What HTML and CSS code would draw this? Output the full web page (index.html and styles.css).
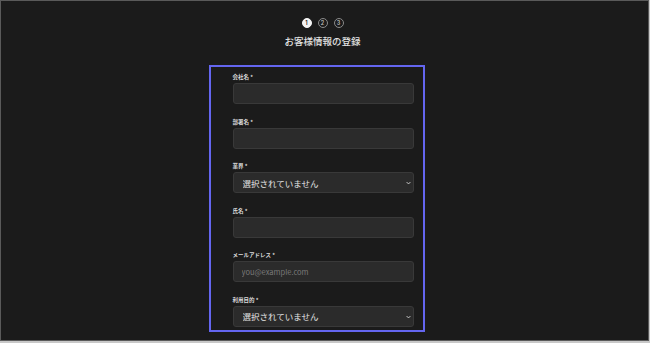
FILE: index.html
```html
<!DOCTYPE html>
<html lang="ja">
<head>
    <meta charset="UTF-8">
    <meta name="viewport" content="width=device-width, initial-scale=1.0">
    <title>お客様情報の登録</title>
    <link rel="stylesheet" href="styles.css">
</head>
<body>
    <div class="frame">
        <div class="column">
            <div class="steps">
                <span class="step active">1</span>
                <span class="step">2</span>
                <span class="step">3</span>
            </div>
            <h1 class="title">お客様情報の登録</h1>

            <form class="form-box">
                <div class="field">
                    <label>会社名 *</label>
                    <input type="text">
                </div>
                <div class="field">
                    <label>部署名 *</label>
                    <input type="text">
                </div>
                <div class="field">
                    <label>業界 *</label>
                    <div class="select-wrap">
                        <select>
                            <option>選択されていません</option>
                        </select>
                        <svg class="chevron" viewBox="0 0 8 5" width="5" height="4"><path d="M1 1l3 3 3-3" fill="none" stroke="#ddd" stroke-width="1.4"/></svg>
                    </div>
                </div>
                <div class="field">
                    <label>氏名 *</label>
                    <input type="text">
                </div>
                <div class="field">
                    <label>メールアドレス *</label>
                    <input type="email" placeholder="you@example.com">
                </div>
                <div class="field">
                    <label>利用目的 *</label>
                    <div class="select-wrap">
                        <select>
                            <option>選択されていません</option>
                        </select>
                        <svg class="chevron" viewBox="0 0 8 5" width="5" height="4"><path d="M1 1l3 3 3-3" fill="none" stroke="#ddd" stroke-width="1.4"/></svg>
                    </div>
                </div>
            </form>
        </div>
    </div>
</body>
</html>
```

FILE: styles.css
```css
html {
    background: #c8c8c8;
}
body {
    margin: 0;
    padding: 0;
    font-family: "Noto Sans CJK JP", "Noto Sans", sans-serif;
    color: #e6e6e6;
}
.frame {
    width: 649px;
    height: 341px;
    box-sizing: border-box;
    border: 1px solid #5a5a5a;
    background: #1b1b1b;
    display: flex;
    justify-content: center;
    padding-right: 4px;
    overflow: hidden;
}
.column {
    width: 184px;
    display: flex;
    flex-direction: column;
    align-items: center;
    padding-top: 17px;
}
.steps {
    display: flex;
    gap: 6px;
}
.step {
    width: 10px;
    height: 10px;
    box-sizing: border-box;
    border-radius: 50%;
    border: 1px solid #8a8a8a;
    color: #bdbdbd;
    font-family: "Inter", sans-serif;
    font-size: 5.5px;
    font-weight: 600;
    display: flex;
    align-items: center;
    justify-content: center;
}
.step.active {
    background: #f4f4f4;
    border-color: #f4f4f4;
    color: #222;
}
.title {
    margin: 6px 0 0;
    font-size: 9.5px;
    line-height: 14px;
    font-weight: 500;
    color: #e2e2e2;
}
.form-box {
    align-self: stretch;
    margin: 17px -10px 0 -22px;
    border: 2px solid #6466f0;
    padding: 6px 9px 3px 22px;
    display: flex;
    flex-direction: column;
    gap: 13.6px;
}
.field {
    display: flex;
    flex-direction: column;
}
.field label {
    font-size: 5.5px;
    line-height: 8px;
    font-weight: 700;
    color: #dcdcdc;
    margin-bottom: 2px;
}
.field input,
.field select {
    display: block;
    width: 100%;
    height: 21px;
    box-sizing: border-box;
    background: #2b2b2b;
    border: 1px solid #393939;
    border-radius: 3px;
    color: #e6e6e6;
    font-family: "Noto Sans CJK JP", "Noto Sans", sans-serif;
    font-size: 7.5px;
    padding: 0 8px;
    outline: none;
    margin: 0;
}
.field input::placeholder {
    color: #7a7a7a;
}
.select-wrap {
    position: relative;
}
.field select {
    appearance: none;
    -webkit-appearance: none;
    font-size: 8.5px;
    padding-left: 9px;
}
.chevron {
    position: absolute;
    right: 3px;
    top: 9px;
}
```
